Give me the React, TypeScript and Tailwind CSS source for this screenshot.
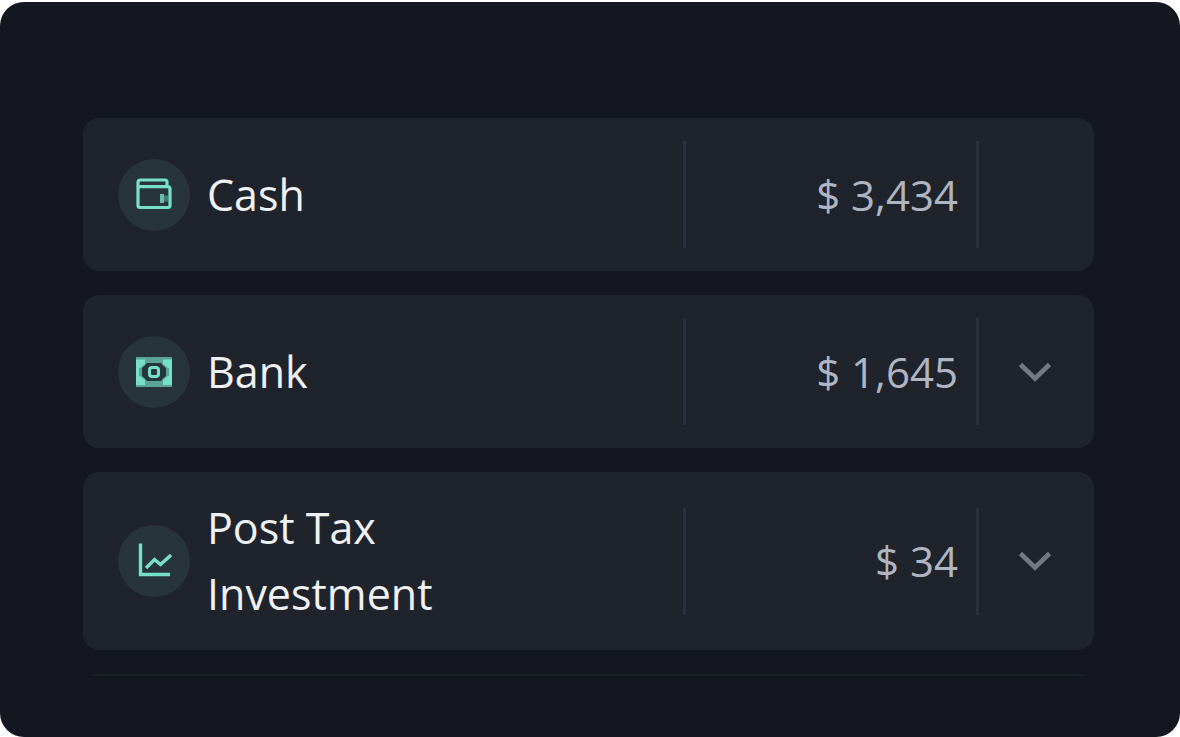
import type { ReactNode } from 'react'

interface Account {
  id: string
  name: string
  amount: number
  icon: ReactNode
  expandable: boolean
}

function WalletIcon() {
  return (
    <svg viewBox="0 0 36 36" className="h-9 w-9" fill="none" stroke="currentColor" strokeWidth="3.2" aria-hidden="true">
      <path d="M31 10V5Q31 3 29 3H4.5Q2 3 2 5.5V28.5Q2 30.5 4 30.5H32Q34 30.5 34 28.5V12.5Q34 9.7 31.5 9.7H2" />
      <path d="M24 17h4v9h-4z" fill="currentColor" stroke="none" opacity="0.8" />
      <path d="M28 18.5h4v6h-4z" fill="currentColor" stroke="none" opacity="0.4" />
    </svg>
  )
}

function CashIcon() {
  return (
    <svg viewBox="0 0 36 36" className="h-9 w-9" fill="currentColor" aria-hidden="true">
      <path
        d="M0 3h36v30H0zM11 9L9 11.5L6 14V22L9 24.5L11 27H25L27 24.5L30 22V14L27 11.5L25 9z"
        fillRule="evenodd"
        opacity="0.65"
      />
      <path d="M0 5.5H9V10L4 14H3V22H4L9 26V31H0zM36 5.5H27V10L32 14H33V22H32L27 26V31H36z" />
      <rect x="13.5" y="13.5" width="9" height="9" rx="2.5" fill="none" stroke="currentColor" strokeWidth="3" />
    </svg>
  )
}

function ChartIcon() {
  return (
    <svg viewBox="0 0 36 36" className="h-9 w-9" fill="none" stroke="currentColor" strokeWidth="3.4" aria-hidden="true">
      <path d="M4.5 0.5V31.5H34" />
      <path d="M10 25L18.5 16.5L24.5 21.5L35 12" />
    </svg>
  )
}

function ChevronIcon() {
  return (
    <svg viewBox="0 0 36 36" className="h-9 w-9" fill="none" stroke="currentColor" strokeWidth="4.6" aria-hidden="true">
      <path d="M3.5 10.5L18 24.5L32.5 10.5" />
    </svg>
  )
}

const accounts: Account[] = [
  { id: 'cash', name: 'Cash', amount: 3434, icon: <WalletIcon />, expandable: false },
  { id: 'bank', name: 'Bank', amount: 1645, icon: <CashIcon />, expandable: true },
  { id: 'post-tax', name: 'Post Tax Investment', amount: 34, icon: <ChartIcon />, expandable: true },
]

function AccountRow({ account }: { account: Account }) {
  return (
    <li className="flex min-h-[153px] items-center rounded-2xl bg-[#1f232b] py-[23px] pl-[35px]">
      <div className="flex min-w-0 flex-1 items-center gap-[17px] pr-24">
        <span className="flex h-18 w-18 shrink-0 items-center justify-center rounded-full bg-[#273439] text-[#76e0c8]">
          {account.icon}
        </span>
        <span className="text-[43px] text-[#f0f1f3]">{account.name}</span>
      </div>
      <div className="flex h-[107px] w-[293px] shrink-0 items-center justify-end border-l-3 border-[#293140] pr-[18px] text-[42px] text-[#b0b5c2]">
        $ {account.amount.toLocaleString('en-US')}
      </div>
      <div className="flex h-[107px] w-[118px] shrink-0 items-center justify-center border-l-3 border-[#293140] pr-[3px]">
        {account.expandable && (
          <button type="button" aria-label={`Expand ${account.name}`} className="text-[#747883]">
            <ChevronIcon />
          </button>
        )}
      </div>
    </li>
  )
}

export default function App() {
  return (
    <div className="flex min-h-screen flex-col bg-white pt-0.5">
      <main className="flex-1 rounded-3xl bg-[#14171f] pt-[116px] pr-[86px] pb-10 pl-[83px] font-['Open_Sans',sans-serif] leading-[66px]">
        <ul className="flex flex-col gap-6">
          {accounts.map((account) => (
            <AccountRow key={account.id} account={account} />
          ))}
        </ul>
        <hr className="mx-2.5 mt-6 border-t-2 border-[#1d2128]" />
      </main>
    </div>
  )
}
